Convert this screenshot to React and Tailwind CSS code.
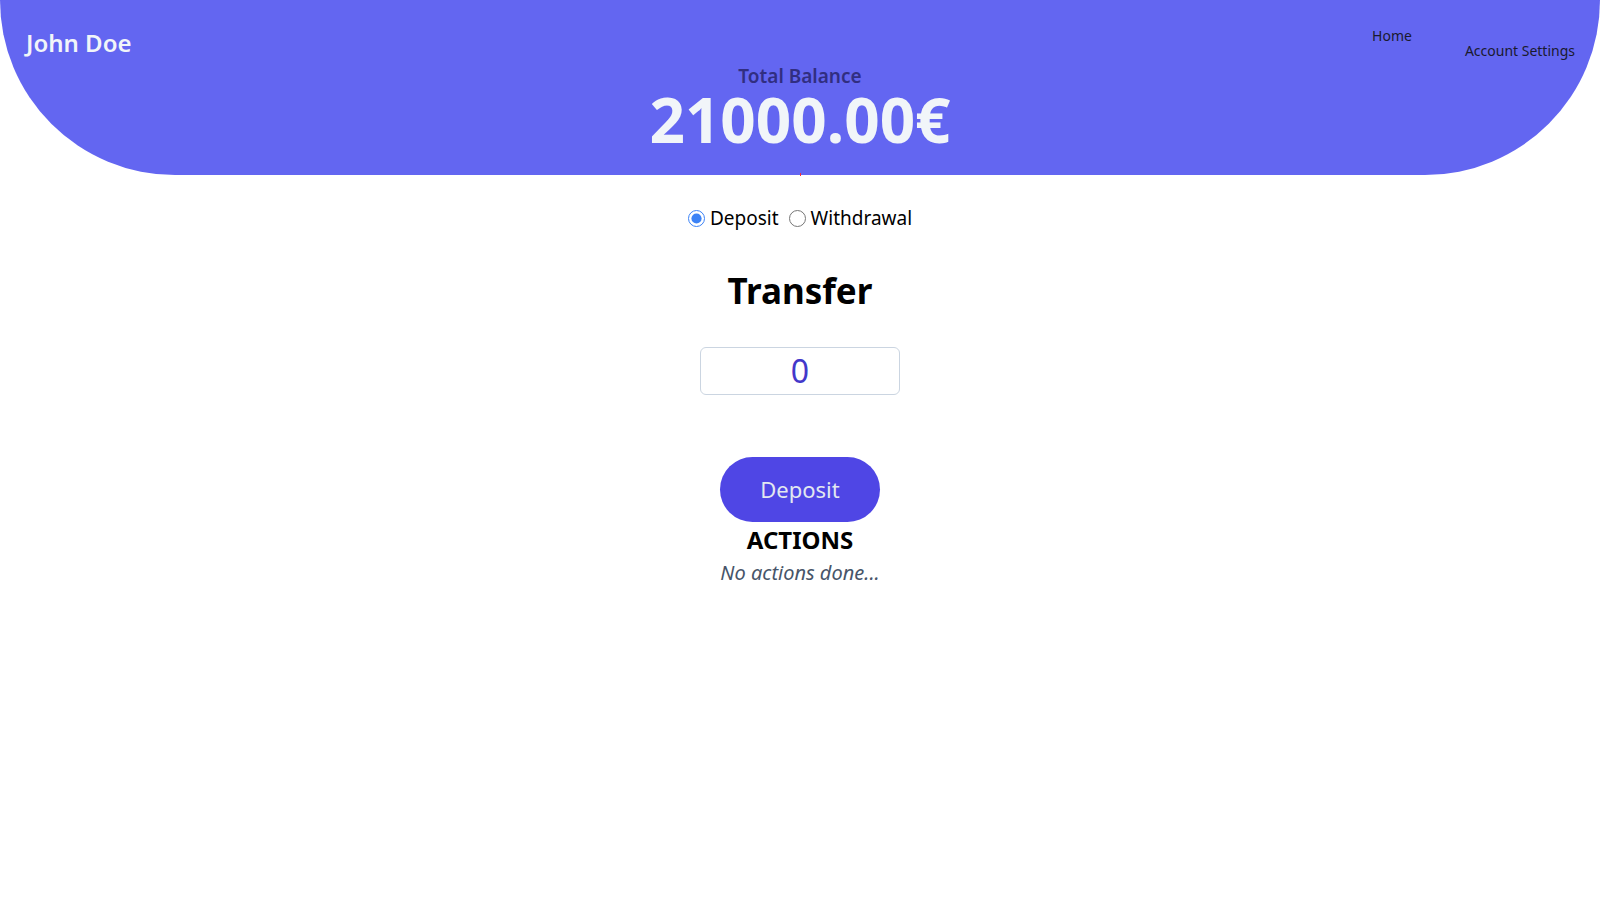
import { useState } from 'react'

const font = { fontFamily: '"Noto Sans", "Open Sans", sans-serif' }

const Header = ({ name, balance }) => (
    <header className="grid grid-cols-[1fr_auto_1fr] h-[175px] bg-[#6366f1] rounded-b-[175px]">
        <div className="pl-[26px] pt-[25px]">
            <h1 className="text-[24px] font-semibold leading-[36px] text-[#f1f5f9]">{name}</h1>
        </div>
        <div className="flex flex-col items-center pt-[64px]">
            <p className="text-[19px] font-semibold leading-[24px] text-[#312e81]">Total Balance</p>
            <p className="text-[62px] font-bold leading-none text-[#f1f5f9]">{balance}€</p>
        </div>
        <nav className="flex justify-end items-start gap-[53px] pr-[25px] pt-[25px] text-[14px] text-[#1a1a2e]">
            <a href="#">Home</a>
            <a href="#" className="mt-[15px]">Account Settings</a>
        </nav>
    </header>
)

export default function App() {
    const [mode, setMode] = useState('deposit')
    const [amount, setAmount] = useState('0')

    return (
        <div className="min-h-screen bg-white" style={font}>
            <Header name="John Doe" balance="21000.00" />
            <div className="h-[3px] w-px bg-red-500 mx-auto mt-[-2px]" />
            <main className="flex flex-col items-center">
                <div className="flex items-center gap-[10px] mt-[28px] text-[19px] leading-[28px] text-black">
                    <label className="flex items-center gap-[5px]">
                        <input type="radio" name="mode" className="w-[17px] h-[17px] accent-[#3b82f6]" checked={mode === 'deposit'} onChange={() => setMode('deposit')} />
                        Deposit
                    </label>
                    <label className="flex items-center gap-[5px]">
                        <input type="radio" name="mode" className="w-[17px] h-[17px] accent-[#3b82f6]" checked={mode === 'withdrawal'} onChange={() => setMode('withdrawal')} />
                        Withdrawal
                    </label>
                </div>
                <h2 className="mt-[39px] text-[35px] font-bold leading-[40px] text-black">Transfer</h2>
                <input
                    type="text"
                    inputMode="numeric"
                    value={amount}
                    onChange={e => setAmount(e.target.value)}
                    className="mt-[36px] w-[200px] h-[48px] border border-[#cbd5e1] rounded-md text-center text-[32px] text-[#4338ca] outline-none"
                />
                <button className="mt-[62px] w-[160px] h-[65px] rounded-full bg-[#4f46e5] text-[22px] text-[#e2e8f0]">
                    {mode === 'deposit' ? 'Deposit' : 'Withdraw'}
                </button>
                <h3 className="mt-[2px] text-[24px] font-bold leading-[32px] text-black">ACTIONS</h3>
                <p className="mt-[3px] text-[20px] italic leading-[28px] text-[#475569]">No actions done...</p>
            </main>
        </div>
    )
}
